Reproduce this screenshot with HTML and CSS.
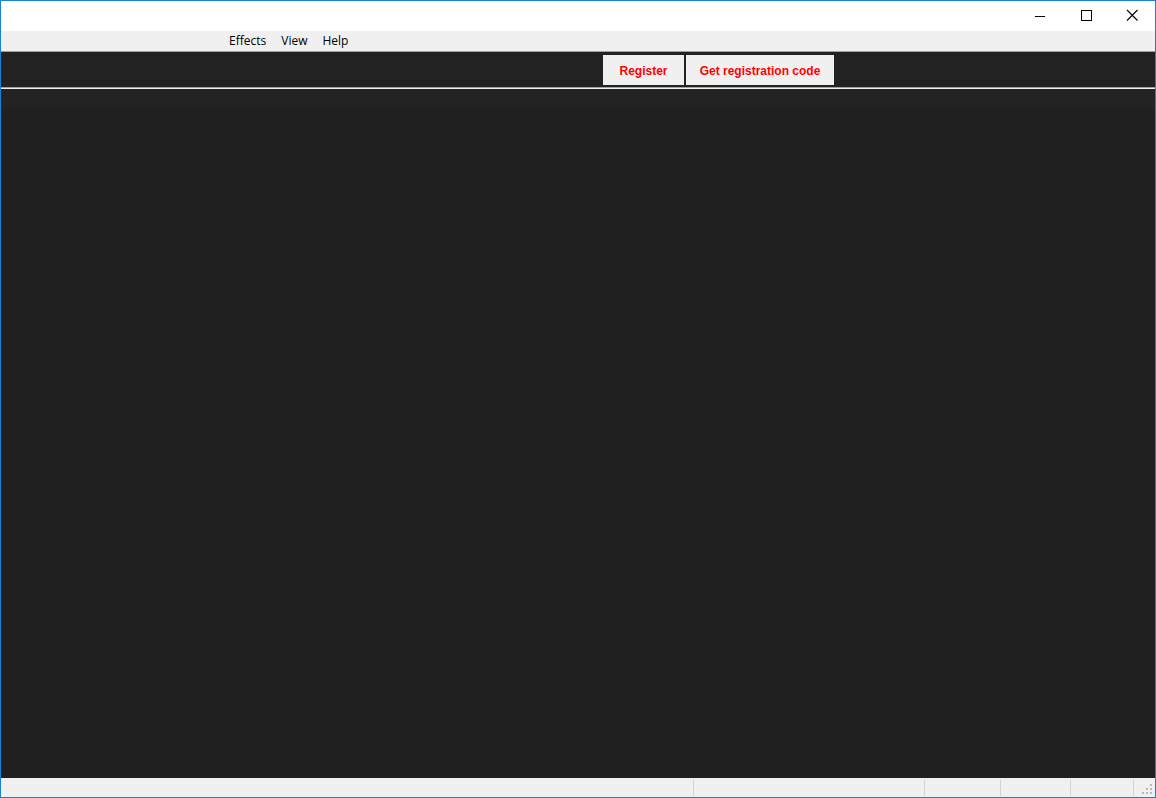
FILE: index.html
```html
<!DOCTYPE html>
<html>
<head>
<meta charset="utf-8">
<link rel="stylesheet" href="styles.css">
</head>
<body>
<div class="window">
  <div class="titlebar">
    <div class="ctrl">
      <svg width="46" height="30" viewBox="0 0 46 30"><path d="M18 15.5h10" stroke="#000" stroke-width="1" fill="none"/></svg>
    </div>
    <div class="ctrl">
      <svg width="46" height="30" viewBox="0 0 46 30"><rect x="18.5" y="9.5" width="10" height="10" stroke="#000" stroke-width="1" fill="none"/></svg>
    </div>
    <div class="ctrl">
      <svg width="46" height="30" viewBox="0 0 46 30"><path d="M18 9l10.5 10.5M28.5 9L18 19.5" stroke="#000" stroke-width="1.1" fill="none"/></svg>
    </div>
  </div>
  <div class="menubar">
    <span class="menu-item">Effects</span>
    <span class="menu-item">View</span>
    <span class="menu-item">Help</span>
  </div>
  <div class="toolbar">
    <button class="btn btn-register">Register</button>
    <button class="btn btn-code">Get registration code</button>
  </div>
  <div class="content">
    <div class="strip"></div>
  </div>
  <div class="statusbar">
    <div class="panel panel-main"></div>
    <div class="panel panel-a"></div>
    <div class="panel panel-b"></div>
    <div class="panel panel-c"></div>
    <div class="panel panel-d"></div>
    <div class="panel panel-e">
      <svg class="grip" width="12" height="12" viewBox="0 0 12 12" fill="#b8b8b8">
        <rect x="8" y="0" width="2" height="2"/>
        <rect x="4" y="4" width="2" height="2"/><rect x="8" y="4" width="2" height="2"/>
        <rect x="0" y="8" width="2" height="2"/><rect x="4" y="8" width="2" height="2"/><rect x="8" y="8" width="2" height="2"/>
      </svg>
    </div>
  </div>
</div>
</body>
</html>
```
FILE: styles.css
```css
* { box-sizing: border-box; }
html, body { margin: 0; padding: 0; }
body { width: 1156px; height: 798px; overflow: hidden; font-family: "Liberation Sans", Arial, sans-serif; }

.window {
  width: 1156px;
  height: 798px;
  border: 1px solid #1c7fd6;
  display: flex;
  flex-direction: column;
  background: #202020;
}

.titlebar {
  height: 30px;
  background: #ffffff;
  display: flex;
  justify-content: flex-end;
  flex: none;
}
.ctrl { width: 46px; height: 30px; }
.ctrl svg { display: block; }

.menubar {
  height: 21px;
  background: #f0f0f0;
  border-bottom: 1px solid #a0a0a0;
  display: flex;
  align-items: center;
  padding-left: 228px;
  flex: none;
  font-family: "Open Sans", "Noto Sans", sans-serif;
  font-size: 12px;
  color: #000;
}
.menu-item { padding-right: 15px; line-height: 20px; }

.toolbar {
  height: 36px;
  background: #222222;
  border-bottom: 1px solid #a0a0a0;
  box-shadow: 0 1px 0 #f0f0f0;
  margin-bottom: 1px;
  display: flex;
  align-items: flex-start;
  padding-left: 602px;
  padding-top: 3px;
  gap: 2px;
  flex: none;
}
.btn {
  height: 30px;
  border: none;
  background: #f0f0f0;
  color: #ff0000;
  font-family: "Liberation Sans", Arial, sans-serif;
  font-weight: bold;
  font-size: 12px;
  padding: 2px 0 0 0;
  margin: 0;
}
.btn-register { width: 81px; }
.btn-code { width: 148px; }

.content {
  flex: 1;
  background: #202020;
}
.strip { height: 18px; background: #232323; }

.statusbar {
  height: 19px;
  background: #f0f0f0;
  display: flex;
  flex: none;
  padding-top: 2px;
}
.panel { height: 16px; border-left: 1px solid #d4d4d4; }
.panel-main { width: 692px; border-left: none; }
.panel-a { width: 231px; }
.panel-b { width: 76px; }
.panel-c { width: 70px; }
.panel-d { width: 60px; }
.panel-e { flex: 1; border-left: 1px solid #d4d4d4; margin-left: 3px; position: relative; }
.grip { position: absolute; right: 1px; bottom: 0; }
```
